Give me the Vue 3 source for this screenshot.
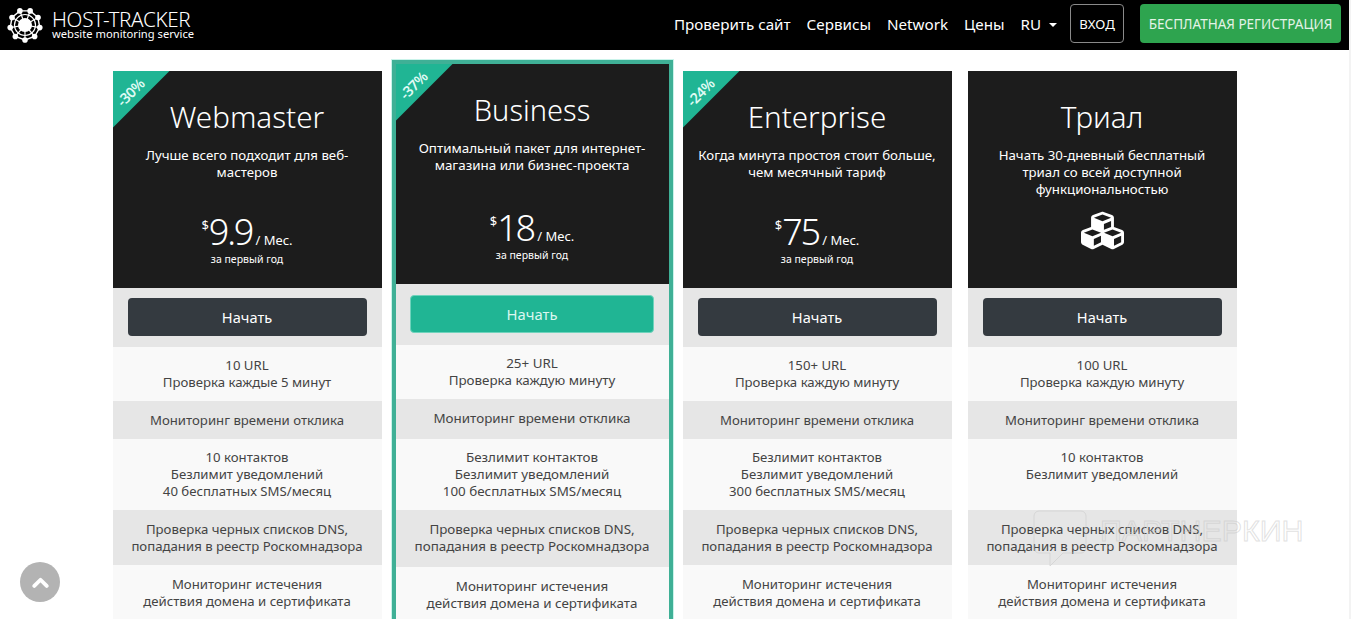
<script setup>
const nodes = Array.from({ length: 9 }, (_, i) => {
  const a = (i / 9) * Math.PI * 2 - Math.PI / 2 + 0.35
  return { x: 25 + Math.cos(a) * 15, y: 24 + Math.sin(a) * 15 }
})
const ring = nodes.map((n) => n.x + ',' + n.y).join(' ')

const dns = ['Проверка черных списков DNS,', 'попадания в реестр Роскомнадзора']
const expiry = ['Мониторинг истечения', 'действия домена и сертификата']
const response = ['Мониторинг времени отклика']

const plans = [
  {
    name: 'Webmaster',
    sale: '-30%',
    desc: ['Лучше всего подходит для веб-', 'мастеров'],
    price: '9.9',
    rows: [
      ['10 URL', 'Проверка каждые 5 минут'],
      response,
      ['10 контактов', 'Безлимит уведомлений', '40 бесплатных SMS/месяц'],
      dns,
      expiry,
    ],
  },
  {
    name: 'Business',
    sale: '-37%',
    featured: true,
    desc: ['Оптимальный пакет для интернет-', 'магазина или бизнес-проекта'],
    price: '18',
    rows: [
      ['25+ URL', 'Проверка каждую минуту'],
      response,
      ['Безлимит контактов', 'Безлимит уведомлений', '100 бесплатных SMS/месяц'],
      dns,
      expiry,
    ],
  },
  {
    name: 'Enterprise',
    sale: '-24%',
    desc: ['Когда минута простоя стоит больше,', 'чем месячный тариф'],
    price: '75',
    rows: [
      ['150+ URL', 'Проверка каждую минуту'],
      response,
      ['Безлимит контактов', 'Безлимит уведомлений', '300 бесплатных SMS/месяц'],
      dns,
      expiry,
    ],
  },
  {
    name: 'Триал',
    trial: true,
    desc: ['Начать 30-дневный бесплатный', 'триал со всей доступной', 'функциональностью'],
    rows: [
      ['100 URL', 'Проверка каждую минуту'],
      response,
      ['10 контактов', 'Безлимит уведомлений', ' '],
      dns,
      expiry,
    ],
  },
]
</script>

<template>
  <div class="page">
    <nav class="navbar">
      <a class="brand">
        <svg class="logo" viewBox="0 0 49 48" width="49" height="48">
          <polygon :points="ring" fill="none" stroke="#fff" stroke-width="1.4" />
          <line
            v-for="(n, i) in nodes"
            :key="i"
            x1="25"
            y1="24"
            :x2="n.x"
            :y2="n.y"
            stroke="#fff"
            stroke-width="1.2"
          />
          <circle cx="25" cy="24" r="10.5" fill="none" stroke="#fff" stroke-width="1.2" />
          <circle cx="25" cy="24" r="7" fill="#fff" />
          <circle v-for="(n, i) in nodes" :key="'n' + i" :cx="n.x" :cy="n.y" r="2.8" fill="#fff" />
        </svg>
        <span class="brand-text">
          <span class="brand-name">HOST-TRACKER</span>
          <span class="brand-sub">website monitoring service</span>
        </span>
      </a>
      <ul class="menu">
        <li>Проверить сайт</li>
        <li>Сервисы</li>
        <li>Network</li>
        <li>Цены</li>
        <li class="lang">RU <i class="caret"></i></li>
      </ul>
      <button class="btn-login">ВХОД</button>
      <button class="btn-signup">БЕСПЛАТНАЯ РЕГИСТРАЦИЯ</button>
    </nav>

    <main class="plans">
      <section
        v-for="plan in plans"
        :key="plan.name"
        class="plan"
        :class="{ featured: plan.featured, trial: plan.trial }"
      >
        <header class="plan-head">
          <div v-if="plan.sale" class="ribbon"></div>
          <span v-if="plan.sale" class="sale">{{ plan.sale }}</span>
          <h2>{{ plan.name }}</h2>
          <p class="desc">
            <span v-for="line in plan.desc" :key="line">{{ line }}</span>
          </p>
          <svg v-if="plan.trial" class="cubes" viewBox="0 0 512 512" width="43" height="43">
            <path
              fill="#fff"
              d="M488.6 250.2L392 214V105.5c0-15-9.3-28.4-23.4-33.7l-100-37.5c-8.1-3.1-17.1-3.1-25.3 0l-100 37.5c-14.1 5.3-23.4 18.7-23.4 33.7V214l-96.6 36.2C9.3 255.5 0 268.9 0 283.9V394c0 13.6 7.7 26.1 19.9 32.2l100 50c10.1 5.1 22.1 5.1 32.2 0l103.9-52 103.9 52c10.1 5.1 22.1 5.1 32.2 0l100-50c12.2-6.1 19.9-18.6 19.9-32.2V283.9c0-15-9.3-28.4-23.4-33.7zM358 214.8l-85 31.9v-68.2l85-37v73.3zM154 104.1l102-38.2 102 38.2v.6l-102 41.4-102-41.4v-.6zm84 291.1l-85 42.5v-79.1l85-38.8v75.4zm0-112l-102 41.4-102-41.4v-.6l102-38.2 102 38.2v.6zm240 112l-85 42.5v-79.1l85-38.8v75.4zm0-112l-102 41.4-102-41.4v-.6l102-38.2 102 38.2v.6z"
            />
          </svg>
          <template v-else>
            <div class="price"><sup>$</sup><b>{{ plan.price }}</b> <span>/ Мес.</span></div>
            <div class="first-year">за первый год</div>
          </template>
        </header>
        <div class="plan-action"><button>Начать</button></div>
        <div v-for="(row, i) in plan.rows" :key="i" class="row">
          <span v-for="(line, j) in row" :key="j">{{ line }}</span>
        </div>
      </section>
    </main>

    <div class="watermark">
      <svg viewBox="0 0 54 58" width="54" height="58">
        <path
          d="M6 1h42a5 5 0 0 1 5 5v32a5 5 0 0 1-5 5H30L17 56V43H6a5 5 0 0 1-5-5V6a5 5 0 0 1 5-5z"
          fill="none"
          stroke="#c8c8c8"
          stroke-opacity="0.55"
        />
      </svg>
      <span>ПАРТНЕРКИН</span>
    </div>

    <button class="to-top" aria-label="Наверх">
      <svg viewBox="0 0 24 16" width="17" height="11">
        <path d="M3 13l9-9 9 9" fill="none" stroke="#fff" stroke-width="5.5" stroke-linejoin="round" stroke-linecap="round" />
      </svg>
    </button>
  </div>
</template>

<style>
html,
body {
  margin: 0;
  height: 100%;
  overflow: hidden;
  background: #f3f3f3;
}
</style>

<style scoped>
.page {
  position: relative;
  width: 1349px;
  height: 619px;
  overflow: hidden;
  background: #fff;
  font-family: "Noto Sans", "Open Sans", sans-serif;
  font-size: 13.2px;
  color: #444;
}

.navbar {
  display: flex;
  align-items: center;
  height: 50px;
  background: #000;
  color: #fff;
  padding: 0 8px 3px 0;
  box-sizing: border-box;
}
.brand {
  display: flex;
  align-items: center;
  margin-right: auto;
}
.logo {
  margin-top: 3px;
}
.brand-text {
  display: flex;
  flex-direction: column;
  margin-left: 3px;
  margin-top: 1px;
}
.brand-name {
  font-size: 20.6px;
  line-height: 19px;
  font-weight: 300;
  letter-spacing: -0.3px;
}
.brand-sub {
  font-size: 11.2px;
  line-height: 10px;
}
.menu {
  display: flex;
  align-items: center;
  gap: 16px;
  list-style: none;
  margin: 0 13px 0 0;
  padding: 0;
  font-size: 15.2px;
}
.caret {
  display: inline-block;
  vertical-align: 3px;
  margin-left: 4px;
  border-top: 4px solid #fff;
  border-left: 4px solid transparent;
  border-right: 4px solid transparent;
}
.btn-login,
.btn-signup {
  height: 39px;
  font: inherit;
  font-size: 13.2px;
  border-radius: 4px;
  color: #fff;
}
.btn-login {
  width: 54px;
  padding: 0;
  background: #000;
  border: 1px solid #8a8a8a;
  margin-right: 16px;
}
.btn-signup {
  width: 201px;
  padding: 0;
  background: #2ea44f;
  border: 0;
  font-size: 13.5px;
  color: #e4f3e7;
}

.plans {
  display: flex;
  justify-content: center;
  align-items: flex-start;
  gap: 10px;
}
.plan {
  width: 269px;
  margin-top: 21px;
  flex: none;
}
.plan.trial {
  margin-left: 6px;
}
.plan.featured {
  width: 273px;
  margin-top: 10px;
  border: 4px solid #3fb096;
  outline: 1px solid #c9f3ea;
  font-size: 13.4px;
}

.plan-head {
  position: relative;
  height: 217px;
  box-sizing: border-box;
  padding-top: 29px;
  background: #1c1c1c;
  color: #fff;
  text-align: center;
  overflow: hidden;
}
.featured .plan-head {
  height: 220px;
}
.ribbon {
  position: absolute;
  left: 0;
  top: 0;
  width: 57px;
  height: 57px;
  background: #20b594;
  clip-path: polygon(0 0, 100% 0, 0 100%);
}
.sale {
  position: absolute;
  left: -2px;
  top: 11px;
  width: 38px;
  text-align: center;
  font-size: 14.5px;
  font-weight: 600;
  letter-spacing: -0.5px;
  color: #dffaf3;
  transform: rotate(-45deg);
}
.plan-head h2 {
  margin: 0;
  font-size: 29.6px;
  line-height: 34px;
  font-weight: 300;
}
.featured .plan-head h2 {
  font-size: 29px;
}
.desc {
  display: flex;
  flex-direction: column;
  height: 51px;
  margin: 13px 0 0;
  font-size: 13.25px;
  line-height: 17px;
}
.featured .desc {
  font-size: 13.4px;
}
.price {
  margin-top: 14px;
  font-size: 13px;
  line-height: 40px;
}
.featured .price {
  margin-top: 17px;
}
.price b {
  font-size: 36px;
  font-weight: 300;
  letter-spacing: -2.2px;
}
.price sup {
  font-size: 13px;
  line-height: 0;
  vertical-align: 15px;
}
.first-year {
  font-size: 10.5px;
  line-height: 14px;
  margin-top: -8px;
}
.cubes {
  display: block;
  margin: 11px auto 0;
}

.plan-action {
  display: flex;
  justify-content: center;
  align-items: flex-start;
  box-sizing: border-box;
  height: 59px;
  padding-top: 10px;
  background: #e6e6e6;
}
.featured .plan-action {
  height: 61px;
  padding-top: 11px;
}
.plan-action button {
  width: 239px;
  height: 38px;
  border: 0;
  border-radius: 4px;
  background: #343a40;
  color: #fff;
  font: inherit;
  font-size: 14.6px;
}
.featured .plan-action button {
  width: 244px;
  background: #20b594;
  border: 1px solid #6fd3bc;
  color: #dcf7f0;
  font-size: 14.8px;
}

.row {
  display: flex;
  flex-direction: column;
  padding: 10px 4px;
  background: #f9f9f9;
  text-align: center;
  line-height: 16.8px;
  white-space: pre;
}
.row:nth-of-type(odd) {
  padding: 11px 4px;
  background: #e6e6e6;
}
.row:last-child {
  padding-top: 11px;
}
.featured .row {
  line-height: 17.2px;
}

.watermark {
  position: absolute;
  left: 1033px;
  top: 510px;
  display: flex;
  gap: 13px;
  pointer-events: none;
}
.watermark span {
  margin-top: 2px;
  font-size: 30.4px;
  line-height: 36px;
  font-family: "Liberation Sans", sans-serif;
  color: transparent;
  -webkit-text-stroke: 1px rgba(200, 200, 200, 0.55);
}

.to-top {
  position: absolute;
  left: 20px;
  top: 562px;
  width: 40px;
  height: 40px;
  padding: 0;
  border: 0;
  border-radius: 50%;
  background: #b3b3b3;
  display: flex;
  align-items: center;
  justify-content: center;
}
</style>
